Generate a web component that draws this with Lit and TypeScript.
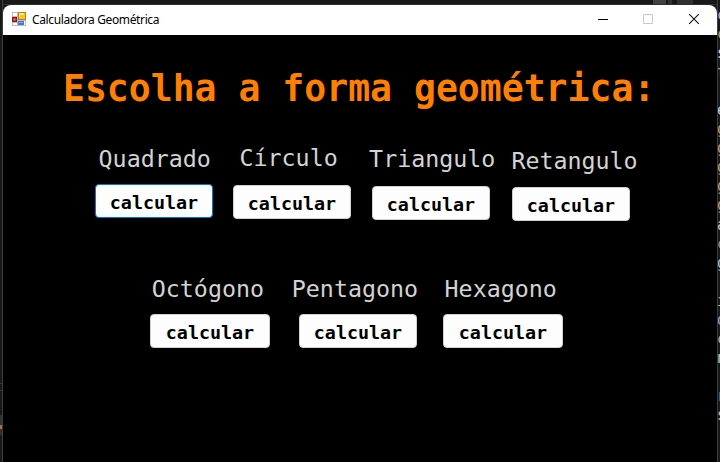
import { LitElement, html, css, svg } from "lit";
import { customElement } from "lit/decorators.js";
import { styleMap } from "lit/directives/style-map.js";

interface Shape {
  name: string;
  gap: number; // space before the item
  top: number; // drop of the label
  indent: number; // label offset from the button's left edge
  drop: number; // drop of the button
  width: number;
  focused?: boolean;
}

const FIRST: Shape[] = [
  { name: "Quadrado", gap: 92, top: 0, indent: 3.6, drop: 0, width: 118, focused: true },
  { name: "Círculo", gap: 20, top: -1, indent: 6.5, drop: 1, width: 118 },
  { name: "Triangulo", gap: 21, top: 0, indent: -2.9, drop: 2, width: 118 },
  { name: "Retangulo", gap: 22, top: 2, indent: -0.6, drop: 3, width: 118 },
];

const SECOND: Shape[] = [
  { name: "Octógono", gap: 147, top: 0, indent: 1.8, drop: 0, width: 120 },
  { name: "Pentagono", gap: 29, top: 0, indent: -7.2, drop: 0, width: 118 },
  { name: "Hexagono", gap: 26, top: 0, indent: 1.6, drop: 0, width: 120 },
];

const CODE: [string, string][] = [
  ["c", "#9cbcd8"], ["c", "#d89868"], ["s", "#c8d8e8"], ["t", "#d0905c"], [":", "#b07848"],
  ["e", "#a8d0e8"], ["g", "#c89878"], ["g", "#c89878"], ["g", "#c89878"], ["g", "#c89878"],
  ["g", "#c89878"], ["a", "#c8ccd8"], ["c", "#b88c70"], ["g", "#9cc8e0"], [":", "#5048b0"],
  ["i", "#98d0c0"], ["d", "#80a8e0"], ["c", "#c8a888"], ["n", "#a8d0c0"], ["", "#fff"],
  ["r", "#a8d0c0"], ["s", "#c8c0b0"],
];

@customElement("shape-option")
class ShapeOption extends LitElement {
  static properties = { shape: { attribute: false } };
  declare shape: Shape;

  static styles = css`
    :host { display: block; flex: none; }
    .label {
      height: 28px;
      white-space: nowrap;
      color: #d3d3d3;
      font: 23.3px/28px "DejaVu Sans Mono", monospace;
    }
    .button {
      display: flex;
      align-items: center;
      justify-content: center;
      box-sizing: border-box;
      width: 100%;
      height: 34px;
      padding: 3px 0 0;
      border: 1px solid #d0d0d0;
      border-radius: 4px;
      background: #fdfdfd;
      color: #000;
      font: bold 18.35px/28px "DejaVu Sans Mono", monospace;
      outline: none;
    }
    .focused { border-color: #0078d4; }
  `;

  render() {
    const s = this.shape;
    return html`
      <div class="label" style=${styleMap({ margin: `${s.top}px 0 ${11 + s.drop - s.top}px ${s.indent}px`, width: `${s.width - s.indent}px` })}>${s.name}</div>
      <button class="button ${s.focused ? "focused" : ""}">calcular</button>
    `;
  }
}

@customElement("app-root")
class AppRoot extends LitElement {
  static styles = css`
    :host {
      display: flex;
      box-sizing: border-box;
      width: 720px;
      height: 462px;
      overflow: hidden;
      background: #181818;
    }
    .left {
      flex: none;
      box-sizing: border-box;
      width: 3px;
      padding-top: 383px;
      border-right: 1px solid #3c3c3c;
    }
    .rule { height: 6px; border-top: 1px solid #383838; border-bottom: 1px solid #383838; }
    .panel { height: 20px; margin-top: 24px; background: #303030; }
    .mark { width: 2px; height: 4px; padding-top: 10px; background: #b06a45; background-clip: content-box; }
    .center { flex: none; width: 714px; display: flex; flex-direction: column; }
    .above { display: flex; gap: 2px; height: 4px; padding-left: 650px; border-bottom: 1px solid #303030; }
    .tab { width: 13px; background: #414141; }
    .tab.slim { width: 4px; background: #303030; margin-right: 3px; }
    .tab.wide { width: 16px; background: #303030; }
    .window { flex: 1; border-radius: 8px 8px 0 0; overflow: hidden; background: #000; }
    .titlebar { display: flex; align-items: center; height: 30px; background: #fff; color: #000; }
    .app-icon { display: block; flex: none; margin: 0 0 2px 9px; }
    .caption { flex: 1; margin-left: 6px; font: 12px/16px "Noto Sans", sans-serif; letter-spacing: -0.37px; white-space: nowrap; }
    .control { display: grid; place-items: center; flex: none; box-sizing: border-box; width: 46px; height: 30px; padding-bottom: 2px; }
    .control:nth-of-type(2) { width: 44px; }
    .heading {
      margin: 32px 0 0 60px;
      height: 44px;
      color: #ff8000;
      font: bold 36.45px/44px "DejaVu Sans Mono", monospace;
      white-space: nowrap;
    }
    .row { display: flex; align-items: flex-start; }
    .row.first { margin-top: 34px; }
    .row.second { margin-top: 54px; height: 75px; }
    .right {
      flex: none;
      box-sizing: border-box;
      width: 3px;
      overflow: hidden;
      padding-top: 6px;
      border-left: 1px solid #3c3c3c;
      font: 15px/19.05px "DejaVu Sans Mono", monospace;
    }
    .glyph { height: 19.05px; margin-left: -0.9px; }
  `;

  private row(items: Shape[]) {
    return items.map(
      (s) => html`<shape-option .shape=${s} style=${styleMap({ "margin-left": `${s.gap}px`, width: `${s.width}px` })}></shape-option>`
    );
  }

  private control(shape: unknown) {
    return html`<div class="control"><svg width="12" height="12" viewBox="0 0 12 12" fill="none">${shape}</svg></div>`;
  }

  render() {
    return html`
      <div class="left"><div class="rule"></div><div class="panel"><div class="mark"></div></div></div>
      <div class="center">
        <div class="above"><div class="tab"></div><div class="tab slim"></div><div class="tab wide"></div></div>
        <div class="window">
          <div class="titlebar">
            <svg class="app-icon" width="14" height="14" viewBox="0 0 14 14">
              <path d="M0 0H14V14H0Z" fill="#b9bcc2" />
              <path d="M1 1H5V4H1ZM1 11H5V13H1ZM12 9H13V13H12Z" fill="#fff" />
              <path d="M6 0H14V8H6Z" fill="#b8860b" />
              <path d="M7 1H13V7H7Z" fill="#f7c331" />
              <path d="M7 1H12V3H8V5H7Z" fill="#ffe68a" />
              <path d="M0 5H5V10H0Z" fill="#8e1a12" />
              <path d="M1 6H4V9H1Z" fill="#d33b2c" />
              <path d="M2 7H3V8H2Z" fill="#f07b68" />
              <path d="M6 9H12V13H6Z" fill="#3f78dc" />
              <path d="M7 10H11V11H7Z" fill="#83adf7" />
            </svg>
            <div class="caption">Calculadora Geométrica</div>
            ${this.control(svg`<path d="M1 6.5H11" stroke="#000" />`)}
            ${this.control(svg`<path d="M1.5 1.5H10.5V10.5H1.5Z" stroke="#c8c8c8" />`)}
            ${this.control(svg`<path d="M1.2 1.2L10.8 10.8M10.8 1.2L1.2 10.8" stroke="#111" stroke-width="1.1" />`)}
          </div>
          <div class="heading">Escolha a forma geométrica:</div>
          <div class="row first">${this.row(FIRST)}</div>
          <div class="row second">${this.row(SECOND)}</div>
        </div>
      </div>
      <div class="right">${CODE.map(([ch, color]) => html`<div class="glyph" style=${styleMap({ color })}>${ch}</div>`)}</div>
    `;
  }
}
